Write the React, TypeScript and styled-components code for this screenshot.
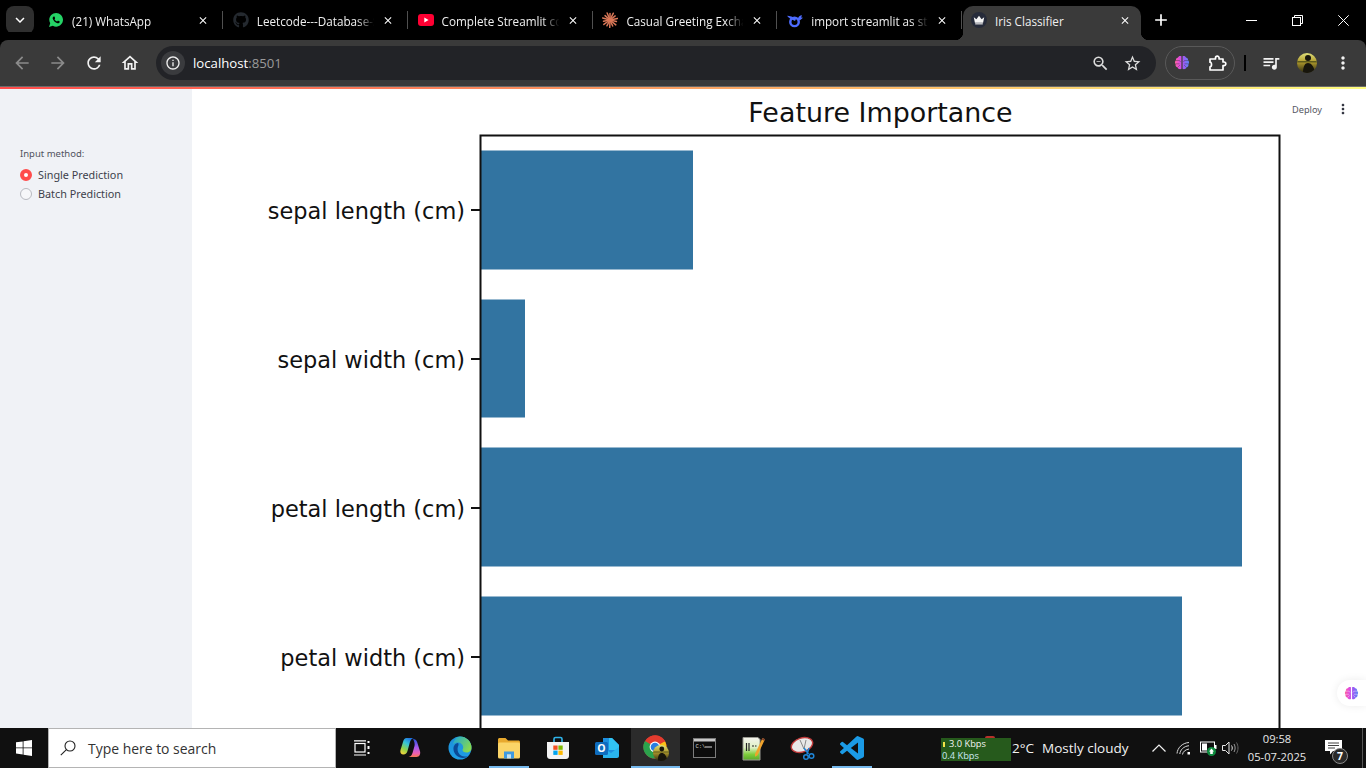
import React from 'react';
import styled, { createGlobalStyle } from 'styled-components';
import { IoLogoWhatsapp } from 'react-icons/io';
import { FaGithub } from 'react-icons/fa';
import {
  MdArrowBack,
  MdArrowForward,
  MdRefresh,
  MdOutlineHome,
  MdInfoOutline,
  MdOutlineZoomOut,
  MdStarBorder,
  MdQueueMusic,
  MdMoreVert,
  MdClose,
  MdAdd,
  MdKeyboardArrowDown,
} from 'react-icons/md';

const UI_FONT = '"Open Sans", "Noto Sans", "Liberation Sans", sans-serif';
const APP_FONT = '"Noto Sans", "Open Sans", sans-serif';
const CHART_FONT = '"DejaVu Sans", sans-serif';

const GlobalStyle = createGlobalStyle`
  html, body {
    margin: 0;
    padding: 0;
    width: 100%;
    height: 100%;
    overflow: hidden;
    background: #fff;
  }
  #root {
    height: 100%;
  }
`;

const Screen = styled.div`
  width: 1366px;
  height: 768px;
  display: grid;
  grid-template-rows: 40px 46px 3px 639px 40px;
  font-family: ${UI_FONT};
`;

/* ---- tab strip ---- */

const TabStrip = styled.div`
  display: flex;
  align-items: center;
  background: #000;
  padding-left: 6px;
`;

const TabSearchButton = styled.div`
  width: 28px;
  height: 28px;
  flex: none;
  margin-right: 5px;
  border-radius: 8px;
  background: #2f2f2f;
  color: #fff;
  display: flex;
  align-items: center;
  justify-content: center;
  font-size: 18px;
`;

const Tab = styled.div`
  width: 184.8px;
  height: 40px;
  flex: none;
  box-sizing: border-box;
  padding-left: 9px;
  display: flex;
  align-items: center;
  color: #f0f0f0;
`;

const ActiveTab = styled.div`
  position: relative;
  width: 178px;
  height: 34px;
  flex: none;
  align-self: flex-end;
  box-sizing: border-box;
  padding: 0 10px 6px 8px;
  display: flex;
  align-items: center;
  color: #f0f0f0;
  background: #3a3a3a;
  border-radius: 10px 10px 0 0;

  &::before,
  &::after {
    content: '';
    position: absolute;
    bottom: 0;
    width: 8px;
    height: 8px;
  }
  &::before {
    left: -8px;
    background: radial-gradient(circle at 0 0, #000 8px, #3a3a3a 8.5px);
  }
  &::after {
    right: -8px;
    background: radial-gradient(circle at 100% 0, #000 8px, #3a3a3a 8.5px);
  }
`;

const TabIcon = styled.span`
  width: 16px;
  height: 16px;
  flex: none;
  margin-right: 8px;
  display: flex;
  align-items: center;
  justify-content: center;
`;

const TabTitle = styled.span<{ $width: number }>`
  width: ${(p) => p.$width}px;
  flex: none;
  overflow: hidden;
  white-space: nowrap;
  font-size: 11.7px;
  line-height: 16px;
  margin-top: 1px;
  -webkit-mask-image: linear-gradient(to right, #000 80%, transparent 94%);
  mask-image: linear-gradient(to right, #000 80%, transparent 94%);
`;

const PlainTabTitle = styled(TabTitle)`
  -webkit-mask-image: none;
  mask-image: none;
`;

const TabClose = styled.span`
  width: 12px;
  height: 16px;
  flex: none;
  display: flex;
  align-items: center;
  justify-content: center;
  color: #fff;
  font-size: 15px;
`;

const TabDivider = styled.span`
  width: 1px;
  height: 18px;
  flex: none;
  margin-left: 13px;
  background: #505050;
`;

const NewTab = styled.div`
  width: 24px;
  margin-left: 8px;
  color: #fff;
  font-size: 20px;
  display: flex;
  justify-content: center;
`;

const WindowControls = styled.div`
  margin-left: auto;
  display: flex;
`;

const WindowButton = styled.div`
  width: 46px;
  height: 40px;
  display: flex;
  align-items: center;
  justify-content: center;
  color: #fff;
`;

/* ---- toolbar ---- */

const Toolbar = styled.div`
  display: flex;
  align-items: center;
  padding: 0 5px 0 4px;
  background: #3a3a3a;
  border-radius: 8px 8px 0 0;
  box-shadow: 0 -8px 0 #000;
`;

const ToolButton = styled.div<{ $dim?: boolean }>`
  width: 36px;
  height: 36px;
  flex: none;
  display: flex;
  align-items: center;
  justify-content: center;
  font-size: 20px;
  color: ${(p) => (p.$dim ? '#8b8b8b' : '#f2f2f2')};
`;

const AddressBar = styled.div`
  flex: 1;
  height: 34px;
  margin-left: 8px;
  padding: 0 8px 0 5px;
  display: flex;
  align-items: center;
  background: #222327;
  border-radius: 17px;
`;

const SiteInfo = styled.div`
  width: 24px;
  height: 24px;
  margin-right: 8px;
  border-radius: 50%;
  background: #3a3b3e;
  color: #f0f0f0;
  font-size: 16px;
  display: flex;
  align-items: center;
  justify-content: center;
`;

const Url = styled.div`
  flex: 1;
  color: #fff;
  font-size: 13.2px;
  span {
    color: #9a9a9a;
  }
`;

const AddressAction = styled.div`
  width: 32px;
  display: flex;
  justify-content: center;
  color: #dcdcdc;
  font-size: 19px;
`;

const ExtensionGroup = styled.div`
  width: 70px;
  height: 34px;
  margin-left: 9px;
  flex: none;
  box-sizing: border-box;
  border: 1px solid #595959;
  border-radius: 17px;
  display: flex;
  align-items: center;
  justify-content: space-between;
  padding: 0 7px 0 8px;
`;

const ToolbarRule = styled.div`
  width: 2px;
  height: 16px;
  flex: none;
  margin: 0 7px 0 9px;
  background: #000;
`;

const ProgressLine = styled.div`
  background: linear-gradient(90deg, #ff4b4b 0%, #fdc56c 70%, #fffd80 100%);
  border-top: 1px solid #6a6a6a;
`;

/* ---- streamlit page ---- */

const Page = styled.div`
  position: relative;
  display: flex;
  overflow: hidden;
  background: #fff;
`;

const Sidebar = styled.aside`
  width: 192px;
  flex: none;
  box-sizing: border-box;
  padding: 58px 20px 0;
  background: #f0f2f6;
  font-family: ${APP_FONT};
  color: #3d3f4b;
`;

const RadioLabel = styled.div`
  font-size: 9.5px;
  line-height: 13px;
  margin-bottom: 5px;
  color: #50525e;
`;

const RadioRow = styled.div`
  display: flex;
  align-items: center;
  height: 19px;
  font-size: 10.8px;
`;

const RadioDot = styled.span<{ $on?: boolean }>`
  width: 12px;
  height: 12px;
  flex: none;
  box-sizing: border-box;
  margin-right: 6px;
  border-radius: 50%;
  background: ${(p) => (p.$on ? '#fff' : '#f6f7f9')};
  border: ${(p) => (p.$on ? '4px solid #ff4b4b' : '1px solid #b8bac0')};
`;

const Main = styled.main`
  flex: 1;
  padding-left: 58px;
`;

const ChartSvg = styled.svg`
  display: block;
  font-family: ${CHART_FONT};
`;

const AppHeader = styled.div`
  position: absolute;
  top: 12px;
  right: 15px;
  display: flex;
  align-items: center;
  gap: 13px;
  font-family: ${APP_FONT};
  font-size: 9.2px;
  color: #555763;
`;

const HeaderMenu = styled.span`
  display: flex;
  font-size: 16px;
  color: #31333f;
`;

const FloatingBrain = styled.div`
  position: absolute;
  right: 0;
  bottom: 22px;
  width: 29px;
  height: 26px;
  box-sizing: border-box;
  padding-left: 7px;
  display: flex;
  align-items: center;
  background: #fff;
  border-radius: 13px 0 0 13px;
  box-shadow: 0 0 8px rgba(0, 0, 0, 0.08);
`;

/* ---- taskbar ---- */

const Taskbar = styled.div`
  display: flex;
  align-items: stretch;
  background: #101010;
  color: #f2f2f2;
`;

const StartButton = styled.div`
  width: 48px;
  flex: none;
  display: flex;
  align-items: center;
  justify-content: center;
`;

const SearchBox = styled.div`
  width: 288px;
  flex: none;
  box-sizing: border-box;
  display: flex;
  align-items: center;
  margin-right: 1px;
  padding-left: 11px;
  background: #fff;
  border: 1px solid #b4b4b4;
  color: #333;
  font-size: 13.95px;
`;

const SearchLabel = styled.span`
  margin-left: 12px;
`;

const AppCell = styled.div<{ $active?: boolean; $running?: boolean }>`
  position: relative;
  width: 49px;
  flex: none;
  display: flex;
  align-items: center;
  justify-content: center;
  background: ${(p) => (p.$active ? '#2b2b2b' : 'transparent')};

  &::after {
    content: '';
    display: ${(p) => (p.$active || p.$running ? 'block' : 'none')};
    position: absolute;
    bottom: 0;
    height: 2px;
    left: ${(p) => (p.$active ? '0' : '5px')};
    right: ${(p) => (p.$active ? '0' : '4px')};
    background: #76b9ed;
  }
`;

const Tray = styled.div`
  margin-left: auto;
  padding-right: 3px;
  display: flex;
  align-items: center;
`;

const NetSpeed = styled.div`
  position: relative;
  width: 70px;
  height: 23px;
  flex: none;
  margin-top: 3px;
  box-sizing: border-box;
  padding-left: 1px;
  background: #265a1c;
  font-size: 9.3px;
  line-height: 12px;

  &::before {
    content: '';
    position: absolute;
    left: 44px;
    top: -2px;
    width: 10px;
    height: 2px;
    border-radius: 5px 5px 0 0;
    background: #b8322a;
  }
`;

const NetRow = styled.div<{ $up?: boolean }>`
  color: ${(p) => (p.$up ? '#f4f4f4' : '#cfe9f4')};
  padding-left: ${(p) => (p.$up ? '7px' : '0')};
`;

const UploadBar = styled.span`
  position: absolute;
  left: 2px;
  top: 4px;
  width: 2px;
  height: 5px;
  background: #f2e24a;
`;

const Weather = styled.div`
  width: 136px;
  flex: none;
  display: flex;
  font-size: 13.5px;
  padding-left: 1px;
  box-sizing: border-box;
`;

const Degrees = styled.span`
  width: 30px;
`;

const TrayIcon = styled.div<{ $width: number }>`
  width: ${(p) => p.$width}px;
  flex: none;
  display: flex;
  justify-content: center;
`;

const Clock = styled.div`
  width: 72px;
  flex: none;
  text-align: center;
  font-size: 11.2px;
  line-height: 18px;
  color: #e8e8e8;
  margin-top: -1px;
`;

const Notifications = styled.div`
  position: relative;
  width: 40px;
  flex: none;
  align-self: stretch;
  display: flex;
  justify-content: center;
  padding-top: 12px;
  box-sizing: border-box;
`;

const NotifyBadge = styled.span`
  position: absolute;
  left: 19px;
  top: 20px;
  width: 16px;
  height: 16px;
  box-sizing: border-box;
  border: 1px solid #8a8a8a;
  border-radius: 50%;
  background: #2a2a2a;
  color: #fff;
  font-size: 10.5px;
  font-weight: 700;
  line-height: 14px;
  text-align: center;
`;

const ShowDesktop = styled.div`
  width: 1px;
  flex: none;
  align-self: stretch;
  margin-left: 9px;
  background: #555;
`;

/* ---- drawn icons ---- */

const BrainIcon = ({ id, gap, size = 16 }: { id: string; gap: string; size?: number }) => (
  <svg width={size} height={size} viewBox="0 0 16 16">
    <defs>
      <linearGradient id={id} x1="0" y1="0" x2="16" y2="0" gradientUnits="userSpaceOnUse">
        <stop offset="0" stopColor="#ff6a8a" />
        <stop offset="0.3" stopColor="#e84bd8" />
        <stop offset="0.62" stopColor="#9a5cf5" />
        <stop offset="1" stopColor="#4f8df5" />
      </linearGradient>
    </defs>
    <path
      d="M7.400 1.200C5.800.6 4.400 1.200 4 2.500 2.500 2.800 1.700 4 2 5.300.8 6.200.6 8.100 1.600 9.200c-.4 1.500.5 2.800 1.900 3 .4 1.600 2.500 2.500 3.900 1.600zM8.600 1.200c1.600-.6 3 0 3.400 1.300 1.500.3 2.300 1.500 2 2.800 1.200.9 1.400 2.800.4 3.900.4 1.500-.5 2.800-1.900 3-.4 1.600-2.500 2.500-3.900 1.600z"
      fill={`url(#${id})`}
    />
    <path d="M2 5.500h3.500l1 1.500M1.500 8.800h4M4 12l2-2M14 5.500h-3.500l-1 1.500M14.500 8.800h-4M12 12l-2-2" stroke={gap} strokeWidth="0.700" strokeOpacity="0.6" fill="none" />
  </svg>
);

const PuzzleIcon = () => (
  <svg width="19" height="17" viewBox="0 0 19 17" fill="none" stroke="#fff" strokeWidth="1.700" strokeLinejoin="round">
    <path d="M2 4h5.500V3a1.800 1.800 0 0 1 3.600 0v1H15v3h1a1.800 1.800 0 0 1 0 3.600h-1V15H2v-3.200c2 0 2-4.600 0-4.600z" />
  </svg>
);

const YoutubeIcon = () => (
  <svg width="16" height="12" viewBox="0 0 16 12">
    <rect width="16" height="12" rx="3" fill="#ff0033" />
    <path d="M6.300 3.400 10.600 6 6.300 8.600z" fill="#fff" />
  </svg>
);

const ClaudeIcon = () => (
  <svg width="16" height="16" viewBox="0 0 16 16" stroke="#d97757" strokeWidth="1.500" strokeLinecap="round">
    {[0, 26, 52, 78, 104, 130, 156, 182, 208, 234, 260, 286, 312, 338].map((angle, i) => (
      <line key={angle} x1="8" y1="8" x2="8" y2={i % 2 ? 0.4 : 1.4} transform={`rotate(${angle} 8 8)`} />
    ))}
  </svg>
);

const DeepSeekIcon = () => (
  <svg width="17" height="15" viewBox="0 0 17 15" fill="#4d6bfe">
    <circle cx="8" cy="9" r="4.500" fill="none" stroke="#4d6bfe" strokeWidth="2.600" />
    <path d="M0 2.500c3 0 6.500 1 9.500 3.500l-1 2C5.500 7 2 5.300 0 2.500z" />
    <path d="M11.500 6c.4-2.200 2.200-4 4.500-4l-1 2.200 2 .4-3.500 3z" />
  </svg>
);

const CrownIcon = () => (
  <svg width="16" height="16" viewBox="0 0 16 16">
    <circle cx="8" cy="8" r="8" fill="#262b3a" />
    <path d="M2.800 5.200 5.400 7.200 8 3.800l2.600 3.400 2.600-2-1.100 5.600H3.900z" fill="#f5f5f5" />
    <rect x="4.200" y="11.300" width="7.600" height="1.100" fill="#f5f5f5" />
  </svg>
);

const RestoreIcon = () => (
  <svg width="11" height="11" viewBox="0 0 11 11" fill="none" stroke="#fff" strokeWidth="1">
    <rect x="0.500" y="2.500" width="8" height="8" />
    <path d="M2.500 2.500v-2h8v8h-2" />
  </svg>
);

const MinimizeIcon = () => (
  <svg width="11" height="1" viewBox="0 0 11 1">
    <rect width="11" height="1" fill="#fff" />
  </svg>
);

const WindowCloseIcon = () => (
  <svg width="11" height="11" viewBox="0 0 11 11" stroke="#fff" strokeWidth="1">
    <path d="M.3.300l10.400 10.400M10.700.300.3 10.700" />
  </svg>
);

const AvatarArt = () => (
  <>
    <defs>
      <linearGradient id="avatarSky" x1="0" y1="0" x2="0" y2="1">
        <stop offset="0" stopColor="#dfe07a" />
        <stop offset="0.45" stopColor="#b09a2c" />
        <stop offset="1" stopColor="#2c2a12" />
      </linearGradient>
      <clipPath id="avatarClip">
        <circle cx="10" cy="10" r="10" />
      </clipPath>
    </defs>
    <g clipPath="url(#avatarClip)">
      <rect width="20" height="20" fill="url(#avatarSky)" />
      <path d="M0 8h20v1.500H0z" fill="#5c5a1c" />
      <circle cx="11" cy="5" r="3" fill="#17150c" />
      <path d="M6 20c0-7 2-10 5-10s6 3 7 10z" fill="#17150c" />
    </g>
  </>
);

const Avatar = () => (
  <svg width="20" height="20" viewBox="0 0 20 20">
    <AvatarArt />
  </svg>
);

const WindowsLogo = () => (
  <svg width="16" height="16" viewBox="0 0 16 16" fill="#fff">
    <path d="M0 2.300 6.700 1.400V7.500H0zM7.500 1.300 16 0V7.500H7.500zM0 8.300H6.700V14.500L0 13.600zM7.500 8.300H16V16L7.500 14.700z" />
  </svg>
);

const SearchGlass = () => (
  <svg width="16" height="16" viewBox="0 0 16 16" fill="none" stroke="#222" strokeWidth="1.100">
    <circle cx="10" cy="6" r="5" />
    <path d="M6.400 9.600 .8 15.200" />
  </svg>
);

const TaskViewIcon = () => (
  <svg width="16" height="16" viewBox="0 0 16 16" fill="none" stroke="#fff" strokeWidth="1.200">
    <rect x="1" y="3.500" width="10" height="8.500" />
    <path d="M0 .8h12M0 15h12" />
    <path d="M14.500 1v2M14.500 6v3M14.500 12v2" strokeWidth="2" />
  </svg>
);

const CopilotIcon = () => (
  <svg width="24" height="24" viewBox="0 0 24 24">
    <defs>
      <linearGradient id="copA" x1="0.700" y1="0" x2="0.200" y2="1">
        <stop offset="0" stopColor="#1f6fe0" />
        <stop offset="0.35" stopColor="#35c4d8" />
        <stop offset="0.7" stopColor="#8fd34a" />
        <stop offset="1" stopColor="#f6d33a" />
      </linearGradient>
      <linearGradient id="copB" x1="0.500" y1="0" x2="0.500" y2="1">
        <stop offset="0" stopColor="#2a50d8" />
        <stop offset="0.45" stopColor="#a45cf0" />
        <stop offset="0.8" stopColor="#ee5fb0" />
        <stop offset="1" stopColor="#f4794f" />
      </linearGradient>
    </defs>
    <path d="M7.500 2h7.300c-2.200.4-3.300 2.200-4 4.500L8.500 15c-.6 2.200-1.900 3.500-4 3.500C2 18.500.8 16.500 1.500 14L4 6c.7-2.400 1.800-4 3.500-4z" fill="url(#copA)" />
    <path d="M14 3c2 0 3.500 1 4.200 3.300l2.800 9c.8 2.800-.6 5.700-3.500 5.700H9.500c2.200-.3 3.300-1.800 4-4l2-7c.5-2-.1-4.500-1.500-7z" fill="url(#copB)" />
  </svg>
);

const EdgeIcon = () => (
  <svg width="24" height="24" viewBox="0 0 24 24">
    <defs>
      <linearGradient id="edgeBase" x1="0" y1="0" x2="0" y2="1">
        <stop offset="0" stopColor="#1c8fd8" />
        <stop offset="1" stopColor="#1f9ee6" />
      </linearGradient>
      <linearGradient id="edgeGreen" x1="0" y1="0" x2="1" y2="0.600">
        <stop offset="0" stopColor="#1aa6d8" />
        <stop offset="1" stopColor="#86d94f" />
      </linearGradient>
    </defs>
    <circle cx="12" cy="12" r="11.500" fill="url(#edgeBase)" />
    <path d="M12 .5A11.500 11.500 0 0 1 23.500 12c0 2.800-2.300 4.500-5 4.500-2.500 0-4-1-4-2.500 0-.8.7-1.200.7-2.500C15.200 8.500 12.500 6.500 10 6.500c-2 0-3.500.6-5 2C6 4 8.500.5 12 .5z" fill="url(#edgeGreen)" />
    <path d="M10 7C7 7.500 5.200 10 5.500 13.500c.4 4.500 4.500 8.500 9.500 8.500 2 0 4-.7 5.500-2-1.300.4-2.500.5-3.500.5-3 0-5.500-1.500-6.700-4-1-2.200-1-5 .2-7.500.2-.9 0-1.500-.5-2z" fill="#0b4a96" />
  </svg>
);

const ExplorerIcon = () => (
  <svg width="24" height="24" viewBox="0 0 24 24">
    <path d="M1 3.500C1 2.700 1.700 2 2.500 2h6L11 4.500h10.500c.8 0 1.500.7 1.500 1.500v3H1z" fill="#e8a92e" />
    <rect x="1" y="6.500" width="22" height="16" rx="1.500" fill="#fbd568" />
    <path d="M7 15.500h10v7h-3v-4h-4v4H7z" fill="#3f9ae0" />
    <rect x="10" y="18.500" width="4" height="4" fill="#bfe2f7" />
  </svg>
);

const StoreIcon = () => (
  <svg width="24" height="24" viewBox="0 0 24 24">
    <path d="M8 6V3c0-1 .8-1.500 1.500-1.500h5c.7 0 1.500.5 1.500 1.500v3" fill="none" stroke="#2fb4ea" strokeWidth="1.600" />
    <path d="M1 6h22v14c0 2-1.500 3-3 3H4c-1.500 0-3-1-3-3z" fill="#f3f3f3" />
    <rect x="7.300" y="9.500" width="4.300" height="4.300" fill="#f25022" />
    <rect x="12.400" y="9.500" width="4.300" height="4.300" fill="#7fba00" />
    <rect x="7.300" y="14.600" width="4.300" height="4.300" fill="#00a4ef" />
    <rect x="12.400" y="14.600" width="4.300" height="4.300" fill="#ffb900" />
  </svg>
);

const OutlookIcon = () => (
  <svg width="24" height="24" viewBox="0 0 24 24">
    <path d="M8 2h9l7 7v9c0 1-.8 2-2 2H8z" fill="#1d8fe0" />
    <path d="M14 2h3l7 7v5h-10z" fill="#31c4f3" />
    <path d="M8 12l8 5 8-6v9c0 1-.8 2-2 2H8z" fill="#2ab4ee" />
    <rect x="0" y="6" width="13" height="13" rx="1.500" fill="#0f6cbd" />
    <text x="6.500" y="16.300" textAnchor="middle" fontFamily="Open Sans, sans-serif" fontWeight="700" fontSize="10.500" fill="#fff">
      O
    </text>
  </svg>
);

const ChromeIcon = () => (
  <svg width="26" height="26" viewBox="0 0 26 26">
    <circle cx="12" cy="12" r="11.500" fill="#e33b2e" />
    <path d="M12 12 2 6A11.500 11.500 0 0 0 12 23.500z" fill="#2ba24c" />
    <path d="M12 12 12 23.500A11.500 11.500 0 0 0 22 6.300z" fill="#fbc116" />
    <path d="M12 6.500h10.300A11.500 11.500 0 0 0 2.700 5.200z" fill="#e33b2e" />
    <circle cx="12" cy="12" r="5.400" fill="#fff" />
    <circle cx="12" cy="12" r="4.300" fill="#2a7de1" />
    <g transform="translate(10 10) scale(0.8)">
      <AvatarArt />
    </g>
  </svg>
);

const CmdIcon = () => (
  <svg width="23" height="20" viewBox="0 0 23 20">
    <rect x="0.500" y="0.500" width="22" height="19" fill="#0c0c0c" stroke="#7c7c7c" />
    <rect x="1" y="1" width="21" height="2.500" fill="#c8c8c8" />
    <text x="2.500" y="9.500" fontFamily="Liberation Mono, monospace" fontSize="5.500" fill="#d8d8d8">
      C:\
    </text>
    <rect x="12" y="8.500" width="7" height="1" fill="#d8d8d8" />
  </svg>
);

const NotepadIcon = () => (
  <svg width="24" height="26" viewBox="0 0 24 26">
    <defs>
      <linearGradient id="npPaper" x1="0" y1="0" x2="0" y2="1">
        <stop offset="0" stopColor="#f4f4ee" />
        <stop offset="0.45" stopColor="#dff0c4" />
        <stop offset="0.75" stopColor="#7fce3c" />
        <stop offset="1" stopColor="#5aa82a" />
      </linearGradient>
    </defs>
    <path d="M1 2.500h15l2 2v20.500H1z" fill="url(#npPaper)" stroke="#9a9a92" />
    <path d="M4.500 8v8M7 8v8M10 11h2M13 11h1.500" stroke="#222" strokeWidth="1.200" />
    <path d="M13 19 20.500 3l2.500 1.200-7.500 16-2.500 1.500z" fill="#f0a32c" />
    <path d="M20.500 3l2.500 1.200-.8 1.500-2.500-1.200z" fill="#7a3a2a" />
  </svg>
);

const SnipIcon = () => (
  <svg width="26" height="25" viewBox="0 0 26 25" fill="none">
    <ellipse cx="12" cy="9" rx="11" ry="7" transform="rotate(-18 12 9)" fill="#e8e8e8" stroke="#c23b3b" strokeWidth="1.400" />
    <path d="M10 4 14 13M16 4 14 13" stroke="#888" />
    <path d="M14 12 18.500 18M19 12 17 18" stroke="#1f86d8" strokeWidth="1.500" />
    <circle cx="16" cy="21" r="2.300" stroke="#1f86d8" strokeWidth="1.500" />
    <circle cx="21.500" cy="20" r="2.300" stroke="#1f86d8" strokeWidth="1.500" />
  </svg>
);

const VsCodeIcon = () => (
  <svg width="24" height="24" viewBox="0 0 24 24" fill="#1b9be6">
    <path d="M23.150 2.587 18.210.21a1.494 1.494 0 0 0-1.705.29l-9.460 8.630-4.120-3.128a.999.999 0 0 0-1.276.057L.327 7.261A1 1 0 0 0 .326 8.740L3.899 12 .326 15.260a1 1 0 0 0 .001 1.479L1.650 17.940a.999.999 0 0 0 1.276.057l4.120-3.128 9.460 8.630a1.492 1.492 0 0 0 1.704.29l4.942-2.377A1.500 1.500 0 0 0 24 20.060V3.939a1.500 1.500 0 0 0-.85-1.352zm-5.146 14.861L10.826 12l7.178-5.448v10.896z" />
  </svg>
);

const ChevronUpIcon = () => (
  <svg width="14" height="8" viewBox="0 0 14 8" fill="none" stroke="#f2f2f2" strokeWidth="1.200">
    <path d="M.5 7.500 7 1l6.500 6.500" />
  </svg>
);

const WifiIcon = () => (
  <svg width="16" height="16" viewBox="0 0 16 16" fill="none" stroke="#d8d8d8" strokeWidth="1">
    <path d="M1 13.500C1.500 8 6 3 13 2.500" />
    <path d="M3.800 14C4.200 10 7.500 6.300 13 5.700" />
    <path d="M6.500 14.500C6.800 12 9 9.700 13 9" />
    <rect x="11.500" y="12" width="2.500" height="2.500" fill="#fff" stroke="none" />
  </svg>
);

const BatteryIcon = () => (
  <svg width="17" height="16" viewBox="0 0 17 16">
    <rect x="0.500" y="2" width="14" height="10" fill="none" stroke="#fff" />
    <rect x="2" y="3.500" width="5" height="7" fill="#fff" />
    <rect x="15" y="5" width="1.500" height="4" fill="#fff" />
    <circle cx="11.500" cy="11.500" r="4.500" fill="#0e8a3e" />
    <path d="M11.500 8.500 14 11.500h-1.200V14h-2.600v-2.500H9z" fill="#fff" />
  </svg>
);

const SpeakerIcon = () => (
  <svg width="17" height="14" viewBox="0 0 17 14" fill="none" stroke="#e8e8e8" strokeWidth="1">
    <path d="M.5 4.500h3L7 1v12L3.500 9.500h-3z" />
    <path d="M9.500 4.500c1 1.500 1 3.500 0 5" />
    <path d="M12 3c1.500 2.500 1.500 5.500 0 8" stroke="#9a9a9a" />
    <path d="M14.500 1.500c2 3.500 2 7.500 0 11" stroke="#666" />
  </svg>
);

const NotifyBubble = () => (
  <svg width="17" height="15" viewBox="0 0 17 15" fill="#fff">
    <path d="M0 0h17v11H8l-3 3.500V11H0z" />
    <path d="M3 3h11M3 5.500h11M3 8h7" stroke="#101010" strokeWidth="0.800" />
  </svg>
);

/* ---- data ---- */

const TABS = [
  { title: '(21) WhatsApp', icon: <IoLogoWhatsapp size={18} color="#25d366" /> },
  { title: 'Leetcode---Database-SQL', icon: <FaGithub size={16} color="#24292f" /> },
  { title: 'Complete Streamlit course', icon: <YoutubeIcon /> },
  { title: 'Casual Greeting Exchange', icon: <ClaudeIcon /> },
  { title: 'import streamlit as st', icon: <DeepSeekIcon /> },
];

const BARS = [
  { label: 'sepal length (cm)', y: 151, height: 119, end: 693, tick: 210 },
  { label: 'sepal width (cm)', y: 300, height: 118, end: 525, tick: 359 },
  { label: 'petal length (cm)', y: 448, height: 119, end: 1242, tick: 508 },
  { label: 'petal width (cm)', y: 597, height: 119, end: 1182, tick: 657 },
];

const AXIS_X = 480.5;

const App = () => (
  <>
    <GlobalStyle />
    <Screen>
      <TabStrip>
        <TabSearchButton>
          <MdKeyboardArrowDown />
        </TabSearchButton>
        {TABS.map((tab) => (
          <Tab key={tab.title}>
            <TabIcon>{tab.icon}</TabIcon>
            <TabTitle $width={125}>{tab.title}</TabTitle>
            <TabClose>
              <MdClose />
            </TabClose>
            <TabDivider />
          </Tab>
        ))}
        <ActiveTab>
          <TabIcon>
            <CrownIcon />
          </TabIcon>
          <PlainTabTitle $width={124}>Iris Classifier</PlainTabTitle>
          <TabClose>
            <MdClose />
          </TabClose>
        </ActiveTab>
        <NewTab>
          <MdAdd />
        </NewTab>
        <WindowControls>
          <WindowButton>
            <MinimizeIcon />
          </WindowButton>
          <WindowButton>
            <RestoreIcon />
          </WindowButton>
          <WindowButton>
            <WindowCloseIcon />
          </WindowButton>
        </WindowControls>
      </TabStrip>

      <Toolbar>
        <ToolButton $dim>
          <MdArrowBack />
        </ToolButton>
        <ToolButton $dim>
          <MdArrowForward />
        </ToolButton>
        <ToolButton>
          <MdRefresh />
        </ToolButton>
        <ToolButton>
          <MdOutlineHome />
        </ToolButton>
        <AddressBar>
          <SiteInfo>
            <MdInfoOutline />
          </SiteInfo>
          <Url>
            localhost<span>:8501</span>
          </Url>
          <AddressAction>
            <MdOutlineZoomOut />
          </AddressAction>
          <AddressAction>
            <MdStarBorder />
          </AddressAction>
        </AddressBar>
        <ExtensionGroup>
          <BrainIcon id="brainToolbar" gap="#3a3a3a" />
          <PuzzleIcon />
        </ExtensionGroup>
        <ToolbarRule />
        <ToolButton>
          <MdQueueMusic />
        </ToolButton>
        <ToolButton>
          <Avatar />
        </ToolButton>
        <ToolButton>
          <MdMoreVert />
        </ToolButton>
      </Toolbar>

      <ProgressLine />

      <Page>
        <Sidebar>
          <RadioLabel>Input method:</RadioLabel>
          <RadioRow>
            <RadioDot $on />
            Single Prediction
          </RadioRow>
          <RadioRow>
            <RadioDot />
            Batch Prediction
          </RadioRow>
        </Sidebar>
        <Main>
          <ChartSvg width="1100" height="639" viewBox="250 89 1100 639">
            <text x="880.500" y="122" textAnchor="middle" fontSize="26.900" fill="#111">
              Feature Importance
            </text>
            {BARS.map((bar) => (
              <g key={bar.label}>
                <rect x={AXIS_X} y={bar.y - 0.5} width={bar.end - AXIS_X} height={bar.height} fill="#3274a1" />
                <line x1="471" x2={AXIS_X} y1={bar.tick} y2={bar.tick} stroke="#111" strokeWidth="2" />
                <text x="465" y={bar.tick + 9} textAnchor="end" fontSize="22.440" fill="#111">
                  {bar.label}
                </text>
              </g>
            ))}
            <rect x={AXIS_X} y="135.500" width="799" height="700" fill="none" stroke="#111" strokeWidth="2" />
          </ChartSvg>
        </Main>
        <AppHeader>
          Deploy
          <HeaderMenu>
            <MdMoreVert />
          </HeaderMenu>
        </AppHeader>
        <FloatingBrain>
          <BrainIcon id="brainFloat" gap="#ffffff" size={15} />
        </FloatingBrain>
      </Page>

      <Taskbar>
        <StartButton>
          <WindowsLogo />
        </StartButton>
        <SearchBox>
          <SearchGlass />
          <SearchLabel>Type here to search</SearchLabel>
        </SearchBox>
        <AppCell>
          <TaskViewIcon />
        </AppCell>
        <AppCell>
          <CopilotIcon />
        </AppCell>
        <AppCell>
          <EdgeIcon />
        </AppCell>
        <AppCell $running>
          <ExplorerIcon />
        </AppCell>
        <AppCell>
          <StoreIcon />
        </AppCell>
        <AppCell>
          <OutlookIcon />
        </AppCell>
        <AppCell $active>
          <ChromeIcon />
        </AppCell>
        <AppCell>
          <CmdIcon />
        </AppCell>
        <AppCell>
          <NotepadIcon />
        </AppCell>
        <AppCell>
          <SnipIcon />
        </AppCell>
        <AppCell $running>
          <VsCodeIcon />
        </AppCell>
        <Tray>
          <NetSpeed>
            <UploadBar />
            <NetRow $up>3.0 Kbps</NetRow>
            <NetRow>0.4 Kbps</NetRow>
          </NetSpeed>
          <Weather>
            <Degrees>2°C</Degrees>
            Mostly cloudy
          </Weather>
          <TrayIcon $width={24}>
            <ChevronUpIcon />
          </TrayIcon>
          <TrayIcon $width={26}>
            <WifiIcon />
          </TrayIcon>
          <TrayIcon $width={22}>
            <BatteryIcon />
          </TrayIcon>
          <TrayIcon $width={22}>
            <SpeakerIcon />
          </TrayIcon>
          <Clock>
            <div>09:58</div>
            <div>05-07-2025</div>
          </Clock>
          <Notifications>
            <NotifyBubble />
            <NotifyBadge>7</NotifyBadge>
          </Notifications>
          <ShowDesktop />
        </Tray>
      </Taskbar>
    </Screen>
  </>
);

export default App;
